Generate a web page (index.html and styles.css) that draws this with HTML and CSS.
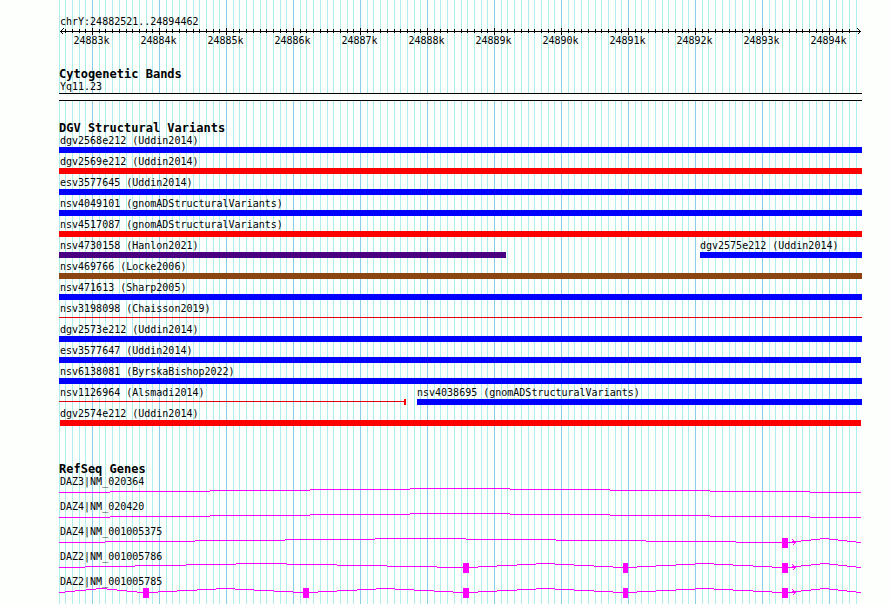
FILE: index.html
```html
<!DOCTYPE html>
<html lang="en">
<head>
<meta charset="utf-8">
<title>chrY:24882521..24894462</title>
<link rel="stylesheet" href="styles.css">
</head>
<body>
<main class="browser">
  <header class="overview">
    <div class="label">chrY:24882521..24894462</div>
    <svg class="ruler" viewBox="59 28 803 7" preserveAspectRatio="none" aria-hidden="true">
      <defs>
        <pattern id="ticks" x="92" y="28" width="67" height="7" patternUnits="userSpaceOnUse">
          <path d="M0 0h1v7h-1zM7 1h1v4h-1zM13 1h1v4h-1zM20 1h1v4h-1zM27 1h1v4h-1zM34 1h1v4h-1zM40 1h1v4h-1zM47 1h1v4h-1zM54 1h1v4h-1zM60 1h1v4h-1z"/>
        </pattern>
      </defs>
      <rect x="65" y="28" width="791" height="7" fill="url(#ticks)"/>
      <path d="M60 31h801v1h-801z"/>
      <path class="chevron" d="M63.5 28.5l-3 3l3 3M857.500 28.500l3 3l-3 3"/>
    </svg>
    <div class="scale">
      <span>24883k</span><span>24884k</span><span>24885k</span><span>24886k</span><span>24887k</span><span>24888k</span><span>24889k</span><span>24890k</span><span>24891k</span><span>24892k</span><span>24893k</span><span>24894k</span>
    </div>
  </header>

  <section class="track">
    <h2>Cytogenetic Bands</h2>
    <div class="label">Yq11.23</div>
    <div class="band"></div>
  </section>

  <section class="track variants">
    <h2>DGV Structural Variants</h2>
    <div class="row"><div class="feature"><div class="label">dgv2568e212 (Uddin2014)</div><div class="bar gain"></div></div></div>
    <div class="row"><div class="feature"><div class="label">dgv2569e212 (Uddin2014)</div><div class="bar loss"></div></div></div>
    <div class="row"><div class="feature"><div class="label">esv3577645 (Uddin2014)</div><div class="bar gain"></div></div></div>
    <div class="row"><div class="feature"><div class="label">nsv4049101 (gnomADStructuralVariants)</div><div class="bar gain"></div></div></div>
    <div class="row"><div class="feature"><div class="label">nsv4517087 (gnomADStructuralVariants)</div><div class="bar loss"></div></div></div>
    <div class="row split-far">
      <div class="feature"><div class="label">nsv4730158 (Hanlon2021)</div><div class="bar inversion"></div></div>
      <div class="feature second"><div class="label">dgv2575e212 (Uddin2014)</div><div class="bar gain"></div></div>
    </div>
    <div class="row"><div class="feature"><div class="label">nsv469766 (Locke2006)</div><div class="bar complex"></div></div></div>
    <div class="row"><div class="feature"><div class="label">nsv471613 (Sharp2005)</div><div class="bar gain"></div></div></div>
    <div class="row"><div class="feature"><div class="label">nsv3198098 (Chaisson2019)</div><div class="bar thin"></div></div></div>
    <div class="row"><div class="feature"><div class="label">dgv2573e212 (Uddin2014)</div><div class="bar gain"></div></div></div>
    <div class="row"><div class="feature"><div class="label">esv3577647 (Uddin2014)</div><div class="bar gain ends-inside"></div></div></div>
    <div class="row"><div class="feature"><div class="label">nsv6138081 (ByrskaBishop2022)</div><div class="bar gain"></div></div></div>
    <div class="row split-near">
      <div class="feature"><div class="label">nsv1126964 (Alsmadi2014)</div><div class="bar thin capped"></div></div>
      <div class="feature second"><div class="label">nsv4038695 (gnomADStructuralVariants)</div><div class="bar gain"></div></div>
    </div>
    <div class="row"><div class="feature"><div class="label">dgv2574e212 (Uddin2014)</div><div class="bar loss ends-inside starts-inside"></div></div></div>
  </section>

  <section class="track genes">
    <h2>RefSeq Genes</h2>
    <div class="gene">
      <div class="label">DAZ3|NM_020364</div>
      <svg viewBox="59 0 803 13" preserveAspectRatio="none" aria-hidden="true">
        <path d="M59 4.500H110m0-1H210m0-1H310m0-1H410m0-1H510m0 1H610m0 1H710m0 1H810m0 1H861"/>
      </svg>
    </div>
    <div class="gene">
      <div class="label">DAZ4|NM_020420</div>
      <svg viewBox="59 0 803 13" preserveAspectRatio="none" aria-hidden="true">
        <path d="M59 4.500H110m0-1H210m0-1H310m0-1H410m0-1H510m0 1H610m0 1H710m0 1H810m0 1H861"/>
      </svg>
    </div>
    <div class="gene">
      <div class="label">DAZ4|NM_001005375</div>
      <svg viewBox="59 0 803 13" preserveAspectRatio="none" aria-hidden="true">
        <path d="M59 4.500H105m0-1H195m0-1H285m0-1H375m0-1H466m0 1H556m0 1H646m0 1H736m0 1H796M792 3.500H801m0-1H811m0-1H820m0-1H829m0 1H838m0 1H847m0 1H856m0 1H861"/>
        <path d="M792.500 1.500l3 3l-3 3"/>
        <rect x="782" y="0" width="6" height="10"/>
      </svg>
    </div>
    <div class="gene">
      <div class="label">DAZ2|NM_001005786</div>
      <svg viewBox="59 0 803 13" preserveAspectRatio="none" aria-hidden="true">
        <path d="M59 4.500H85m0-1H135m0-1H186m0-1H236m0-1H287m0 1H337m0 1H387m0 1H437m0 1H478m0-1H497m0-1H517m0-1H536m0-1H555m0 1H574m0 1H594m0 1H613m0 1H637m0-1H656m0-1H676m0-1H695m0-1H714m0 1H733m0 1H753m0 1H772m0 1H796M792 3.500H801m0-1H811m0-1H820m0-1H829m0 1H838m0 1H847m0 1H856m0 1H861"/>
        <path d="M792.500 1.500l3 3l-3 3"/>
        <rect x="463" y="0" width="6" height="10"/>
        <rect x="623" y="0" width="5" height="10"/>
        <rect x="782" y="0" width="6" height="10"/>
      </svg>
    </div>
    <div class="gene">
      <div class="label">DAZ2|NM_001005785</div>
      <svg viewBox="59 0 803 13" preserveAspectRatio="none" aria-hidden="true">
        <path d="M59 4.500H65m0-1H75m0-1H86m0-1H96m0-1H107m0 1H117m0 1H127m0 1H137m0 1H158m0-1H177m0-1H197m0-1H216m0-1H235m0 1H254m0 1H274m0 1H293m0 1H318m0-1H337m0-1H357m0-1H376m0-1H395m0 1H414m0 1H434m0 1H453m0 1H478m0-1H497m0-1H517m0-1H536m0-1H555m0 1H574m0 1H594m0 1H613m0 1H637m0-1H656m0-1H676m0-1H695m0-1H714m0 1H733m0 1H753m0 1H772m0 1H796M792 3.500H801m0-1H811m0-1H820m0-1H829m0 1H838m0 1H847m0 1H856m0 1H861"/>
        <path d="M792.500 1.500l3 3l-3 3"/>
        <rect x="143" y="0" width="6" height="10"/>
        <rect x="303" y="0" width="6" height="10"/>
        <rect x="463" y="0" width="6" height="10"/>
        <rect x="623" y="0" width="5" height="10"/>
        <rect x="782" y="0" width="6" height="10"/>
      </svg>
    </div>
  </section>
</main>
</body>
</html>
```
FILE: styles.css
```css
:root {
  --minor: #afeeee;
  --major: #87ceeb;
  --paper: #fdfffc;
}

* {
  box-sizing: border-box;
}

body {
  margin: 0;
  background: var(--paper);
  color: #000;
  font: 10px/12px "DejaVu Sans Mono", "Liberation Mono", monospace;
}

/* One 67px tile is 1 kb: a major line followed by nine minor lines. */
.browser {
  min-height: 100vh;
  margin: 0 28px 0 59px;
  padding-top: 16px;
  background-image: linear-gradient(
    to right,
    var(--major) 0 1px, transparent 1px 7px,
    var(--minor) 7px 8px, transparent 8px 13px,
    var(--minor) 13px 14px, transparent 14px 20px,
    var(--minor) 20px 21px, transparent 21px 27px,
    var(--minor) 27px 28px, transparent 28px 34px,
    var(--minor) 34px 35px, transparent 35px 40px,
    var(--minor) 40px 41px, transparent 41px 47px,
    var(--minor) 47px 48px, transparent 48px 54px,
    var(--minor) 54px 55px, transparent 55px 60px,
    var(--minor) 60px 61px, transparent 61px 67px
  );
  background-size: 67px 100%;
  background-position: 33px 0;
}

.label {
  padding-left: 1px;
  white-space: nowrap;
}

h2 {
  margin: 0;
  font-size: 12px;
  line-height: 14px;
}

svg {
  display: block;
  width: 100%;
  shape-rendering: crispEdges;
}

.ruler {
  height: 7px;
}

.chevron {
  fill: none;
  stroke: #000;
}

.scale {
  display: flex;
  overflow: hidden;
}

.scale span {
  flex: none;
  width: 67px;
  padding-right: 2px;
  text-align: center;
}

.track {
  margin-top: 20px;
}

.band {
  height: 8px;
  border: solid #000;
  border-width: 1px 0;
  background: var(--paper);
}

.row {
  display: grid;
  grid-template-columns: minmax(0, 1fr);
  height: 21px;
}

.split-far {
  grid-template-columns: minmax(0, 447fr) minmax(0, 162fr);
  column-gap: 194px;
}

.split-near {
  grid-template-columns: minmax(0, 347fr) minmax(0, 445fr);
  column-gap: 11px;
}

.second .label {
  padding-left: 0;
}

.bar {
  height: 6px;
}

.gain {
  background: #00f;
}

.loss {
  background: #f00;
}

.inversion {
  background: #4b0082;
}

.complex {
  background: #8b4513;
}

.thin {
  background: linear-gradient(#e00010, #e00010) 0 2px / 100% 1px no-repeat;
}

.capped {
  border-right: 2px solid #f00;
}

.ends-inside {
  margin-right: 1px;
}

.starts-inside {
  margin-left: 1px;
}

.genes {
  margin-top: 33px;
}

.gene svg {
  height: 13px;
}

.gene path {
  fill: none;
  stroke: #f0f;
}

.gene rect {
  fill: #f0f;
}
```
